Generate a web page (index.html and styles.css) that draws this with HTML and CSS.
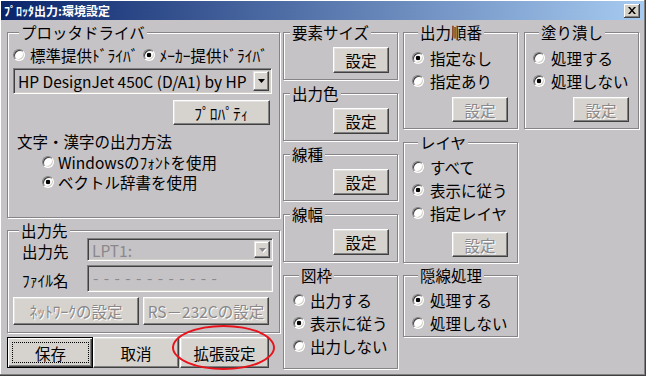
FILE: index.html
```html
<!DOCTYPE html>
<html>
<head>
    <meta charset="UTF-8">
    <title>ﾌﾟﾛｯﾀ出力:環境設定</title>
    <link rel="stylesheet" href="styles.css">
</head>
<body>
    <div class="window">
        <div class="titlebar">
            <span class="title">ﾌﾟﾛｯﾀ出力:環境設定</span>
            <span class="close"><svg width="8" height="7" viewBox="0 0 8 7"><path d="M0 0h2l2 2.4L6 0h2L5 3.5 8 7H6L4 4.6 2 7H0l3-3.5z"/></svg></span>
        </div>
        <div class="client">
            <div class="col col-left">
                <div class="group g-driver">
                    <div class="legend">プロッタドライバ</div>
                    <div class="radio-line">
                        <label class="radio"><span class="rb"></span>標準提供ﾄﾞﾗｲﾊﾞ</label>
                        <label class="radio on"><span class="rb"></span>ﾒｰｶｰ提供ﾄﾞﾗｲﾊﾞ</label>
                    </div>
                    <div class="combo">
                        <span class="combo-text">HP DesignJet 450C (D/A1) by HP</span>
                        <span class="drop"><svg width="7" height="4" viewBox="0 0 7 4"><path d="M0 0h7L3.5 4z"/></svg></span>
                    </div>
                    <button class="btn btn-prop">ﾌﾟﾛﾊﾟﾃｨ</button>
                    <div class="caption">文字・漢字の出力方法</div>
                    <div class="radios sub">
                        <label class="radio"><span class="rb"></span>Windowsのﾌｫﾝﾄを使用</label>
                        <label class="radio on"><span class="rb"></span>ベクトル辞書を使用</label>
                    </div>
                </div>
                <div class="group g-port">
                    <div class="legend">出力先</div>
                    <div class="field-row">
                        <span class="field-label">出力先</span>
                        <div class="combo combo-off">
                            <span class="combo-text">LPT1:</span>
                            <span class="drop"><svg width="7" height="4" viewBox="0 0 7 4"><path d="M0 0h7L3.5 4z"/></svg></span>
                        </div>
                    </div>
                    <div class="field-row row-file">
                        <span class="field-label">ﾌｧｲﾙ名</span>
                        <div class="textbox">------------</div>
                    </div>
                    <div class="btn-pair">
                        <button class="btn" disabled>ﾈｯﾄﾜｰｸの設定</button>
                        <button class="btn" disabled>RS－232Cの設定</button>
                    </div>
                </div>
                <div class="actions">
                    <button class="btn btn-default"><span class="focus">保存</span></button>
                    <button class="btn btn-cancel">取消</button>
                    <button class="btn btn-ext">拡張設定</button>
                    <span class="mark"></span>
                </div>
            </div>

            <div class="col col-mid">
                <div class="group g-small">
                    <div class="legend">要素サイズ</div>
                    <button class="btn btn-set">設定</button>
                </div>
                <div class="group g-small">
                    <div class="legend">出力色</div>
                    <button class="btn btn-set">設定</button>
                </div>
                <div class="group g-small g-thin">
                    <div class="legend">線種</div>
                    <button class="btn btn-set">設定</button>
                </div>
                <div class="group g-small">
                    <div class="legend">線幅</div>
                    <button class="btn btn-set">設定</button>
                </div>
                <div class="group g-frame">
                    <div class="legend">図枠</div>
                    <div class="radios">
                        <label class="radio"><span class="rb"></span>出力する</label>
                        <label class="radio on"><span class="rb"></span>表示に従う</label>
                        <label class="radio"><span class="rb"></span>出力しない</label>
                    </div>
                </div>
            </div>

            <div class="col col-a">
                <div class="group g-order">
                    <div class="legend">出力順番</div>
                    <div class="radios">
                        <label class="radio on"><span class="rb"></span>指定なし</label>
                        <label class="radio"><span class="rb"></span>指定あり</label>
                    </div>
                    <button class="btn btn-set" disabled>設定</button>
                </div>
                <div class="group g-layer">
                    <div class="legend">レイヤ</div>
                    <div class="radios">
                        <label class="radio"><span class="rb"></span>すべて</label>
                        <label class="radio on"><span class="rb"></span>表示に従う</label>
                        <label class="radio"><span class="rb"></span>指定レイヤ</label>
                    </div>
                    <button class="btn btn-set" disabled>設定</button>
                </div>
                <div class="group g-hidden">
                    <div class="legend">隠線処理</div>
                    <div class="radios">
                        <label class="radio on"><span class="rb"></span>処理する</label>
                        <label class="radio"><span class="rb"></span>処理しない</label>
                    </div>
                </div>
            </div>

            <div class="col col-b">
                <div class="group g-order">
                    <div class="legend">塗り潰し</div>
                    <div class="radios">
                        <label class="radio"><span class="rb"></span>処理する</label>
                        <label class="radio on"><span class="rb"></span>処理しない</label>
                    </div>
                    <button class="btn btn-set" disabled>設定</button>
                </div>
            </div>
        </div>
    </div>
</body>
</html>
```

FILE: styles.css
```css
*{
    box-sizing:border-box;
}
body{
    margin:0;
    font-family:"Noto Sans CJK JP","Noto Sans CJK SC",sans-serif;
    font-size:15.5px;
    color:#000;
    background:#c6c3c6;
}
.window{
    width:646px;
    height:376px;
    padding:1px 3px 3px 1px;
    background:#c6c3c6;
    box-shadow:inset -1px -1px #404040,inset -2px -2px #808080,inset 1px 1px #fff;
}
.titlebar{
    display:flex;
    align-items:center;
    height:19px;
    padding:0 3px;
    background:linear-gradient(to right,#0a246a,#a6caf0);
}
.title{
    color:#fff;
    font-size:12px;
    font-weight:bold;
    line-height:19px;
}
.close{
    display:flex;
    align-items:center;
    justify-content:center;
    width:16px;
    height:14px;
    margin-left:auto;
    background:#d4d0c8;
    box-shadow:inset -1px -1px #404040,inset 1px 1px #fff,inset -2px -2px #808080;
}
.client{
    display:flex;
    padding:12px 0 0 6px;
}
.col{
    display:flex;
    flex-direction:column;
    width:115px;
}
.col-left{
    width:273px;
}
.col-mid{
    margin-left:3px;
}
.col-a{
    margin-left:5px;
}
.col-b{
    margin-left:6px;
}

/* group boxes */
.group{
    display:flex;
    flex-direction:column;
    border:1px solid #868486;
    box-shadow:inset 1px 1px #fff,1px 1px #fff;
}
.legend{
    align-self:flex-start;
    margin:-9px 0 0 6px;
    padding:0 2px;
    height:16px;
    line-height:16px;
    background:#c6c3c6;
    white-space:nowrap;
}

/* radios */
.radios{
    display:flex;
    flex-direction:column;
}
.radio{
    display:flex;
    align-items:center;
    height:23px;
    line-height:18px;
    white-space:nowrap;
}
.rb{
    flex:none;
    width:12px;
    height:12px;
    margin-right:6px;
    border-radius:50%;
    background:#fff;
    border:1px solid;
    border-color:#808080 #fff #fff #808080;
    box-shadow:inset 1px 1px #404040,inset -1px -1px #d4d0c8;
}
.radio.on .rb{
    background:radial-gradient(circle,#000 0 2px,#fff 2.6px);
}

/* buttons */
.btn{
    font:inherit;
    line-height:18px;
    color:#000;
    padding:0;
    background:#d6d3ce;
    border:1px solid;
    border-color:#fff #404040 #404040 #fff;
    box-shadow:inset -1px -1px #808080,inset 1px 1px #e4e2de;
    white-space:nowrap;
}
.btn:disabled{
    color:#8a888a;
    text-shadow:1px 1px #fff;
}
.btn-set{
    width:56px;
    height:26px;
    margin:7px 8px 0 auto;
}

/* プロッタドライバ */
.g-driver{
    height:186px;
    padding:0 7px 0 5px;
}
.radio-line{
    display:flex;
    gap:4px;
    margin-top:5px;
}
.radio-line .radio{
    height:20px;
}
.radio-line .rb{
    margin-right:5px;
}
.combo{
    display:flex;
    align-items:stretch;
    height:26px;
    margin-top:3px;
    padding:2px;
    border:1px solid;
    border-color:#808080 #fff #fff #808080;
    box-shadow:inset 1px 1px #404040,inset -1px -1px #d4d0c8;
}
.combo-text{
    flex:1;
    display:flex;
    align-items:center;
    padding-left:2px;
    line-height:18px;
    white-space:nowrap;
}
.drop{
    display:flex;
    align-items:center;
    justify-content:center;
    width:16px;
    background:#d6d3ce;
    border:1px solid;
    border-color:#e4e2de #404040 #404040 #e4e2de;
    box-shadow:inset -1px -1px #808080,inset 1px 1px #fff;
}
.btn-prop{
    align-self:flex-end;
    width:97px;
    height:25px;
    margin:6px 2px 0 0;
}
.caption{
    margin-top:7px;
    padding-left:4px;
    line-height:18px;
}
.sub{
    margin-top:2px;
    padding-left:29px;
}
.sub .radio{
    height:20px;
}
.sub .rb{
    margin-right:4px;
}

/* 出力先 */
.g-port{
    height:103px;
    margin-top:12px;
    padding:0 6px 0 5px;
}
.field-row{
    display:flex;
    align-items:center;
}
.field-label{
    width:74px;
    padding:3px 0 0 9px;
    line-height:18px;
    white-space:nowrap;
}
.combo-off{
    flex:1;
    height:23px;
    margin-top:0;
    color:#8a888a;
}
.combo-off .drop svg{
    fill:#8a888a;
    filter:drop-shadow(1px 1px 0 #fff);
}
.row-file{
    margin-top:4px;
}
.textbox{
    flex:1;
    height:27px;
    padding:1px 0 0 5px;
    line-height:20px;
    color:#8a888a;
    letter-spacing:5.4px;
    border:1px solid;
    border-color:#808080 #fff #fff #808080;
    box-shadow:inset 1px 1px #404040,inset -1px -1px #d4d0c8;
}
.btn-pair{
    display:flex;
    gap:4px;
    margin-top:5px;
}
.btn-pair .btn{
    width:126px;
    height:28px;
}

/* 保存 取消 拡張設定 */
.actions{
    position:relative;
    display:flex;
    height:31px;
    margin-top:4px;
}
.actions .btn{
    height:31px;
    width:86px;
}
.actions .btn-ext{
    margin-left:1px;
    width:89px;
}
.btn-default{
    display:flex;
    border-color:#000;
    box-shadow:inset 1px 1px #fff,inset -1px -1px #404040,inset -2px -2px #808080;
    padding:4px 3px 4px 4px;
}
.focus{
    flex:1;
    display:flex;
    align-items:center;
    justify-content:center;
    border:1px dotted #000;
}
.mark{
    position:absolute;
    left:165px;
    top:-12px;
    width:103px;
    height:45px;
    border:2px solid #e8141c;
    border-radius:50%;
}

/* middle column */
.g-small{
    height:48px;
    margin-top:13px;
}
.g-small:first-child{
    margin-top:0;
}
.g-thin{
    height:47px;
}
.g-frame{
    height:94px;
    margin-top:13px;
    padding-left:9px;
}
.g-frame .radios{
    margin-top:5px;
}
.g-frame .rb{
    margin-right:5px;
}

/* right columns */
.g-order{
    height:97px;
    padding-left:8px;
}
.g-order .radios{
    margin-top:6px;
}
.g-order .btn-set,
.g-layer .btn-set{
    height:25px;
    margin:5px 9px 0 auto;
}
.g-layer{
    height:121px;
    margin-top:13px;
    padding-left:8px;
}
.g-layer .radios{
    margin-top:5px;
}
.g-layer .btn-set{
    margin-top:8px;
}
.g-hidden{
    height:62px;
    margin-top:12px;
    padding-left:8px;
}
.g-hidden .radios{
    margin-top:5px;
}
```
